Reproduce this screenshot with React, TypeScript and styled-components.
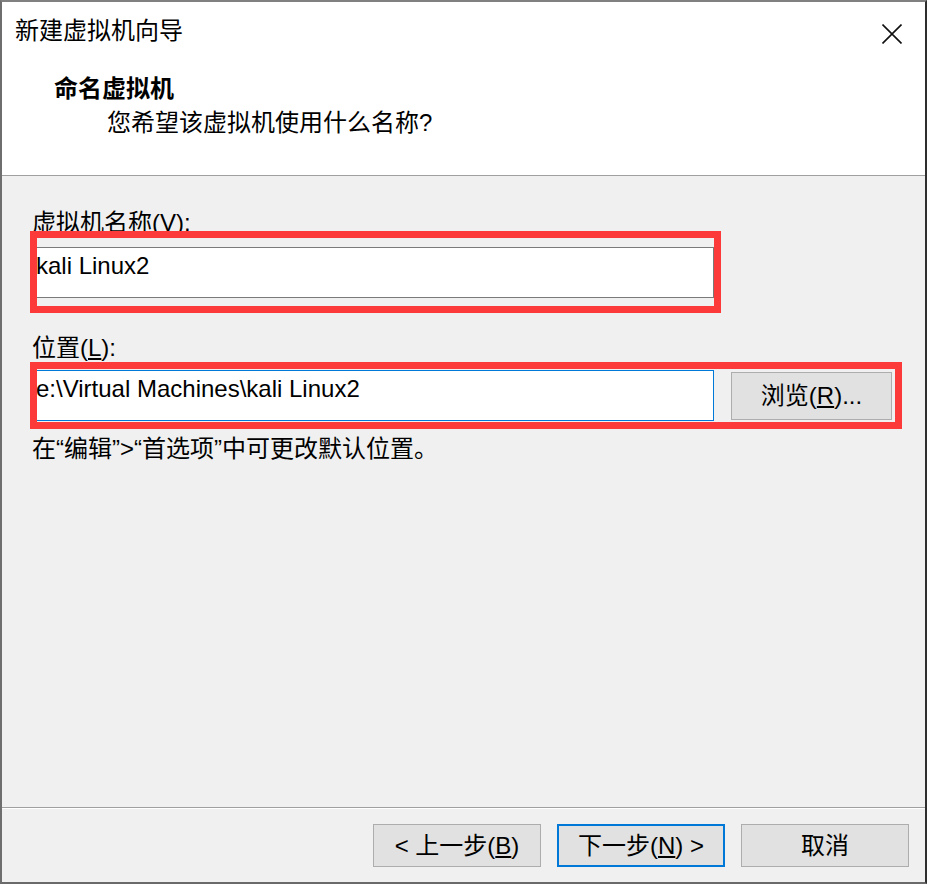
import React from "react";
import styled, { createGlobalStyle } from "styled-components";

const GlobalStyle = createGlobalStyle`
  html, body { margin: 0; padding: 0; background: #ffffff; }
  body { font-family: "Liberation Sans", "Noto Sans CJK SC", sans-serif; }
  * { box-sizing: border-box; }
`;

const Window = styled.div`
  width: 927px;
  height: 884px;
  border-style: solid;
  border-width: 2px;
  border-color: #808080 #2e2e2e #6a6a6a #6e6e6e;
  display: flex;
  flex-direction: column;
  background: #f0f0f0;
  font-family: "Liberation Sans", "Noto Sans CJK SC", sans-serif;
  font-size: 24px;
  line-height: 34px;
  color: #000;
`;

const Header = styled.header`
  background: #ffffff;
  border-bottom: 1px solid #a0a0a0;
  padding-bottom: 35px;
`;

const TitleBar = styled.div`
  display: flex;
  justify-content: space-between;
  align-items: flex-start;
  padding: 12px 23px 0 13px;
`;

const WindowTitle = styled.div`
  font-weight: 400;
`;

const CloseButton = styled.span`
  display: block;
  width: 20px;
  height: 20px;
  margin-top: 5px;
`;

const Heading = styled.div`
  margin-top: 24px;
  padding-left: 52px;
  font-weight: 700;
`;

const Subtitle = styled.div`
  padding-left: 105px;
`;

const Body = styled.main`
  flex: 1;
  display: flex;
  flex-direction: column;
  padding: 30px 0 0 30px;
`;

const Field = styled.section<{ $top: number }>`
  display: flex;
  flex-direction: column;
  margin-top: ${(p) => p.$top}px;
`;

const FieldLabel = styled.label<{ $gap: number }>`
  display: block;
  margin-bottom: ${(p) => p.$gap}px;
`;

const Marked = styled.div`
  position: relative;
  align-self: flex-start;
`;

const Highlight = styled.div<{ $t: number; $r: number; $b: number; $l: number }>`
  position: absolute;
  top: ${(p) => p.$t}px;
  right: ${(p) => p.$r}px;
  bottom: ${(p) => p.$b}px;
  left: ${(p) => p.$l}px;
  border: 7px solid #fd3a3a;
  pointer-events: none;
`;

const TextInput = styled.input<{ $focused?: boolean }>`
  display: block;
  width: 682px;
  height: 51px;
  margin: 0;
  padding: 0 3px 13px 3px;
  border: 1px solid ${(p) => (p.$focused ? "#0078d7" : "#7a7a7a")};
  background: #ffffff;
  font-family: "Liberation Sans", "Noto Sans CJK SC", sans-serif;
  font-size: 24px;
  color: #000;
  outline: none;
`;

const Row = styled.div`
  display: flex;
  align-items: center;
  gap: 17px;
`;

const BrowseButton = styled.button`
  width: 161px;
  height: 48px;
  padding: 0;
  background: #e1e1e1;
  border: 1px solid #adadad;
  font-family: inherit;
  font-size: 24px;
  line-height: 34px;
  color: #000;
`;

const Hint = styled.p`
  margin: 11px 0 0 0;
`;

const Footer = styled.footer`
  display: flex;
  justify-content: flex-end;
  gap: 16px;
  padding: 16px 16px 15px 0;
  border-top: 1px solid #a0a0a0;
  box-shadow: inset 0 1px 0 #ffffff;
`;

const DialogButton = styled.button<{ $primary?: boolean }>`
  width: 168px;
  height: 43px;
  padding: 0;
  background: #e1e1e1;
  border: ${(p) => (p.$primary ? "2px solid #0078d7" : "1px solid #adadad")};
  font-family: inherit;
  font-size: 24px;
  line-height: 34px;
  color: #000;
`;

export default function App() {
  return (
    <>
      <GlobalStyle />
      <Window>
        <Header>
          <TitleBar>
            <WindowTitle>新建虚拟机向导</WindowTitle>
            <CloseButton aria-label="关闭">
              <svg width="20" height="20" viewBox="0 0 20 20">
                <path d="M0.5 0.5 L19.5 19.5 M19.5 0.5 L0.5 19.5" stroke="#111" strokeWidth="1.6" fill="none" />
              </svg>
            </CloseButton>
          </TitleBar>
          <Heading>命名虚拟机</Heading>
          <Subtitle>您希望该虚拟机使用什么名称?</Subtitle>
        </Header>
        <Body>
          <Field $top={0}>
            <FieldLabel $gap={7}>
              虚拟机名称(<u>V</u>):
            </FieldLabel>
            <Marked>
              <TextInput value="kali Linux2" readOnly />
              <Highlight $t={-16} $r={-7} $b={-15} $l={-2} />
            </Marked>
          </Field>
          <Field $top={33}>
            <FieldLabel $gap={5}>
              位置(<u>L</u>):
            </FieldLabel>
            <Marked>
              <Row>
                <TextInput $focused value="e:\Virtual Machines\kali Linux2" readOnly />
                <BrowseButton>
                  浏览(<u>R</u>)...
                </BrowseButton>
              </Row>
              <Highlight $t={-8} $r={-10} $b={-8} $l={-2} />
            </Marked>
            <Hint>在“编辑”&gt;“首选项”中可更改默认位置。</Hint>
          </Field>
        </Body>
        <Footer>
          <DialogButton>
            &lt; 上一步(<u>B</u>)
          </DialogButton>
          <DialogButton $primary>
            下一步(<u>N</u>) &gt;
          </DialogButton>
          <DialogButton>取消</DialogButton>
        </Footer>
      </Window>
    </>
  );
}
